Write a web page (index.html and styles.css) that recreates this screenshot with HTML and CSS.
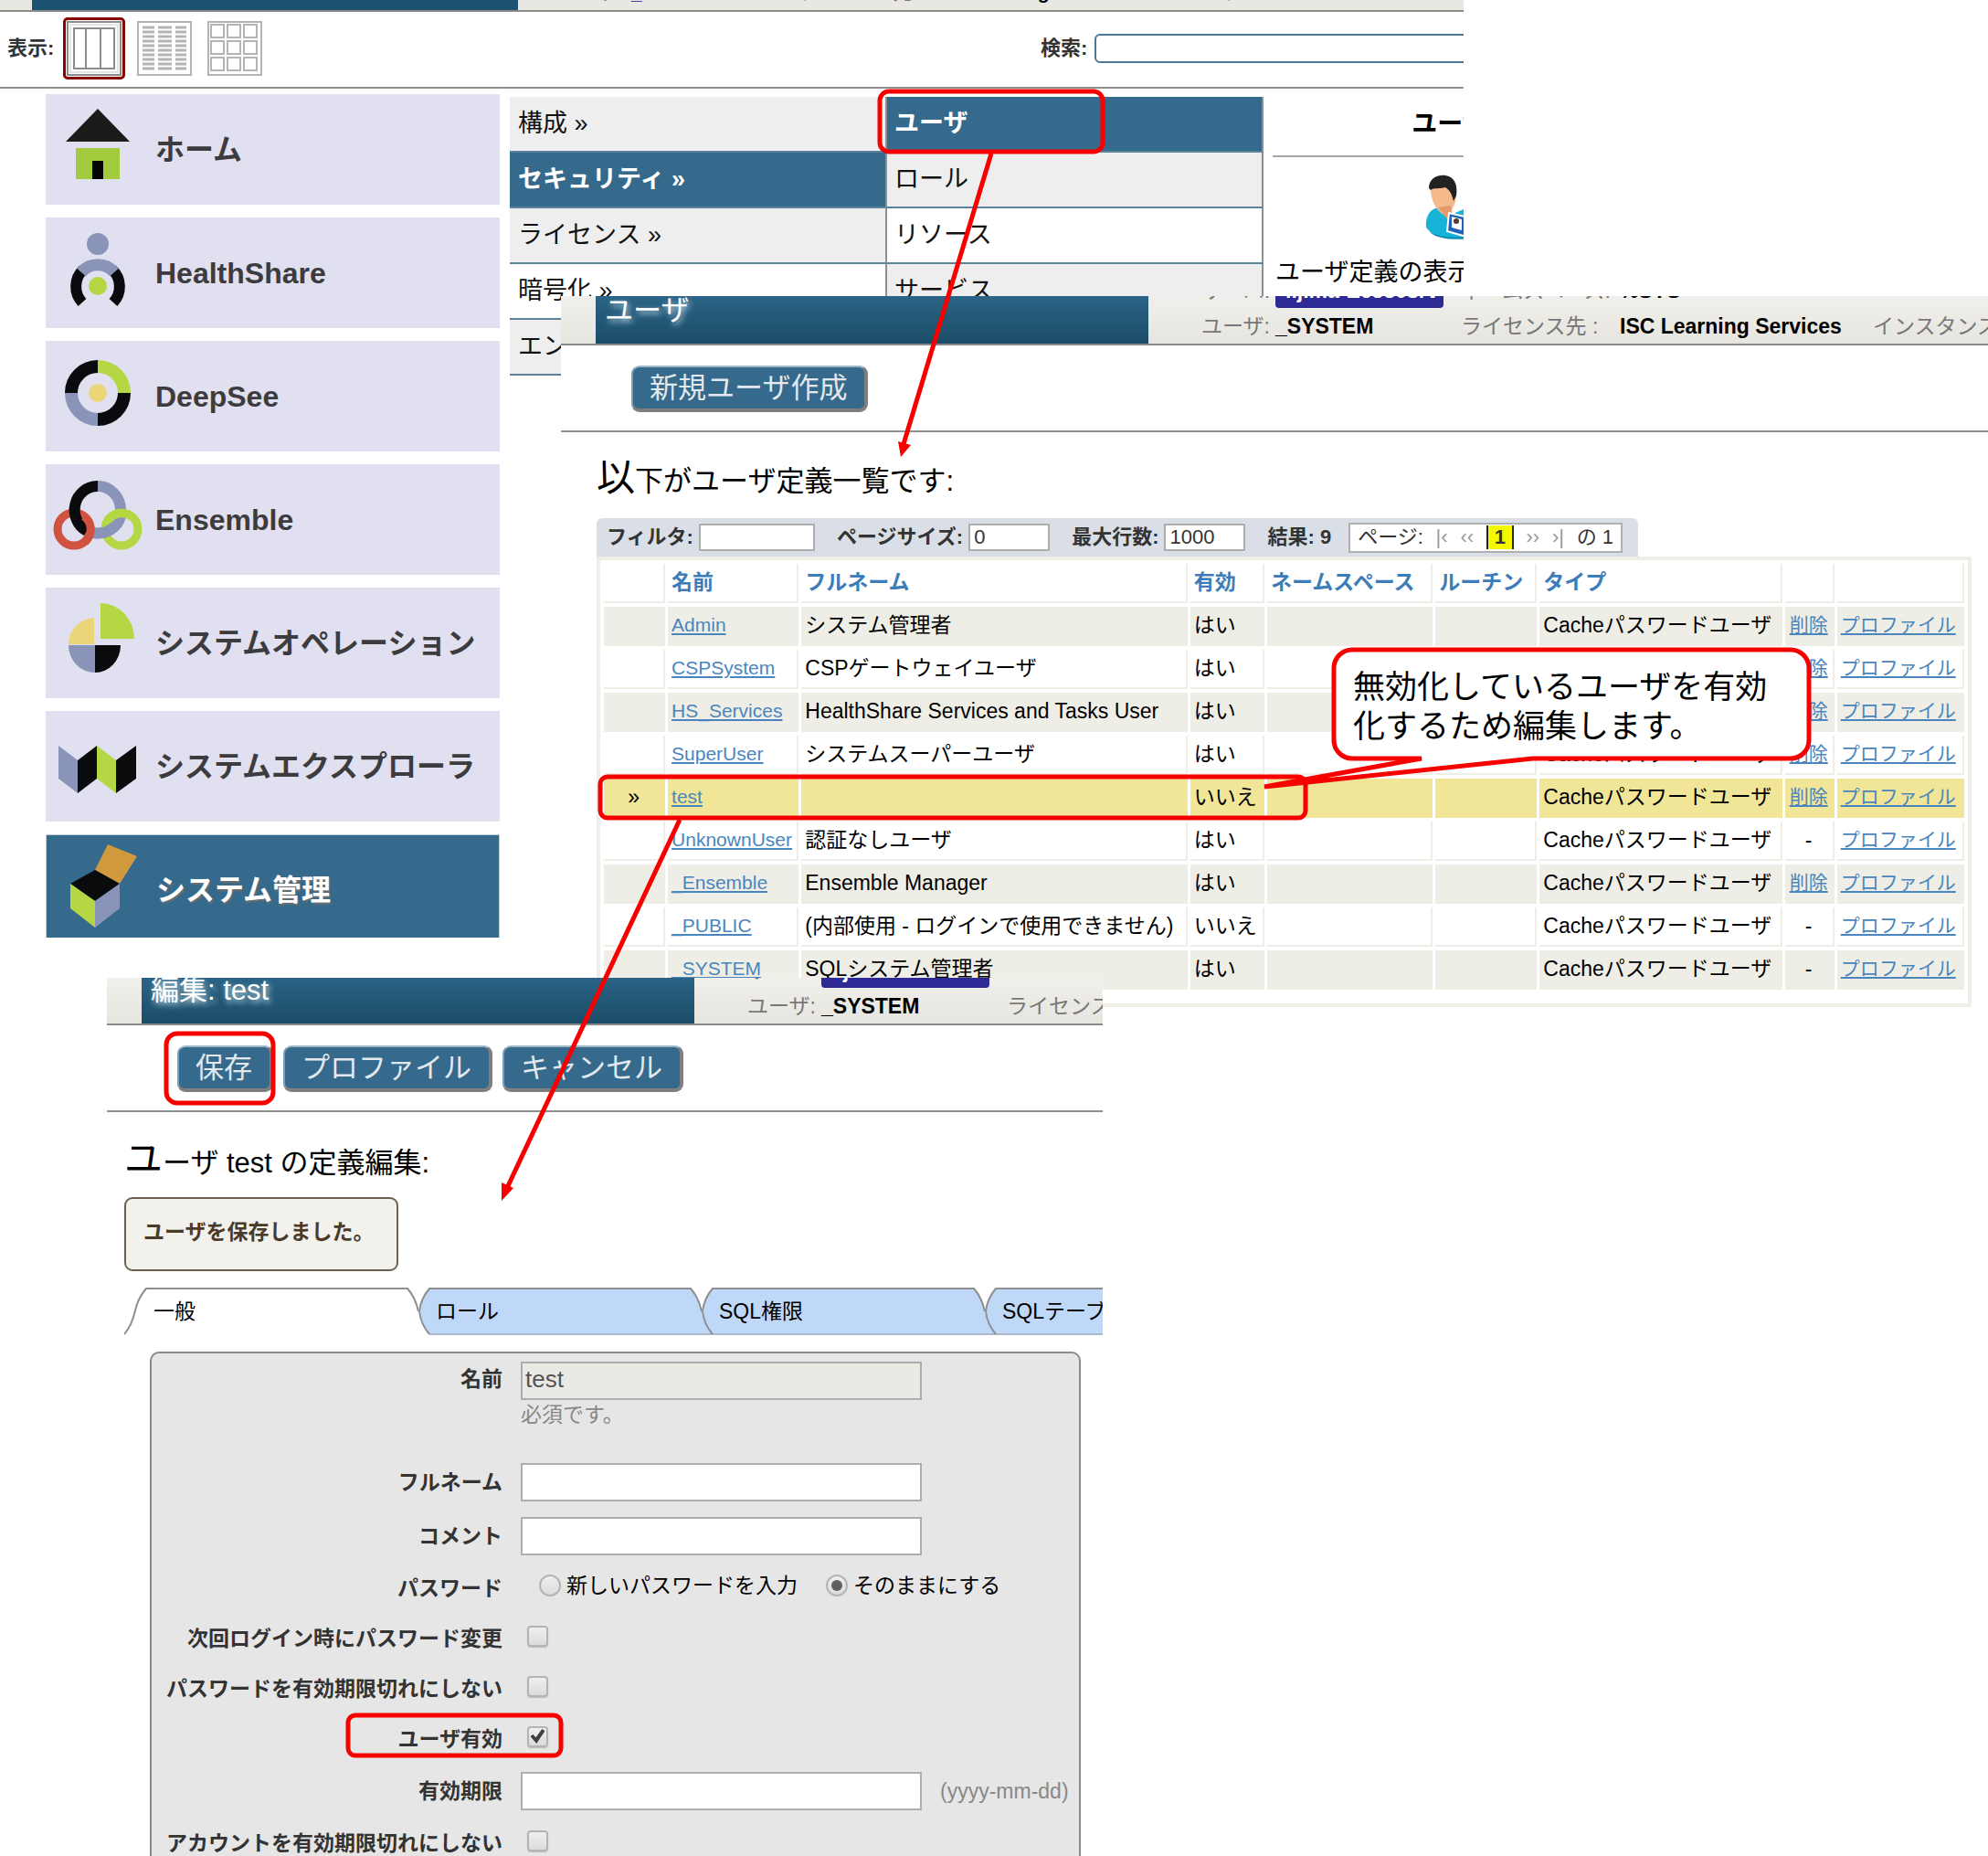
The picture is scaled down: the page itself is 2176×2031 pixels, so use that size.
FILE: index.html
```html
<!DOCTYPE html>
<html lang="ja">
<head>
<meta charset="utf-8">
<title>ユーザ管理</title>
<link rel="stylesheet" href="styles.css">
</head>
<body>
<main class="desk">

  <section class="window window-home">
    <header class="banner banner-small">
      <div class="banner-title"></div>
      <div class="banner-info">
        <span>サーバ:</span><span></span><span></span><span></span><span></span>
        <span>ユーザ:</span><b class="visited">_SYSTEM</b><span>ライセンス先:</span><b>ISC Learning Services</b><span>インスタンス</span>
      </div>
    </header>
    <div class="viewbar">
      <div class="views">
        <span class="bar-label">表示:</span>
        <button class="view view-on" aria-label="列">
          <svg width="60" height="60" viewBox="0 0 60 60" fill="#fff" stroke="#8c8c8c" stroke-width="2"><rect x="1" y="1" width="58" height="58"/><rect x="4" y="4" width="52" height="52" stroke="#e4e4e4"/><rect x="8" y="8" width="44" height="44"/><path d="M21 8v44M37 8v44"/></svg>
        </button>
        <button class="view" aria-label="リスト">
          <svg width="60" height="60" viewBox="0 0 60 60" fill="#fff" stroke="#b4b4b4" stroke-width="2"><rect x="1" y="1" width="58" height="58"/><path stroke-width="3" d="M6 7h13M23 7h15M42 7h12M6 12h13M23 12h15M42 12h12M6 17h13M23 17h15M42 17h12M6 22h13M23 22h15M42 22h12M6 27h13M23 27h15M42 27h12M6 32h13M23 32h15M42 32h12M6 37h13M23 37h15M42 37h12M6 42h13M23 42h15M42 42h12M6 47h13M23 47h15M42 47h12M6 52h13M23 52h15M42 52h12"/></svg>
        </button>
        <button class="view" aria-label="アイコン">
          <svg width="60" height="60" viewBox="0 0 60 60" fill="#fff" stroke="#b4b4b4" stroke-width="2"><rect x="1" y="1" width="58" height="58"/><path d="M4 4h14v14H4zM22 4h14v14H22zM40 4h14v14H40zM4 22h14v14H4zM22 22h14v14H22zM40 22h14v14H40zM4 40h14v14H4zM22 40h14v14H22zM40 40h14v14H40z"/></svg>
        </button>
      </div>
      <div class="search"><label class="bar-label" for="search">検索:</label><input id="search" type="text"></div>
    </div>
    <div class="home-body">
      <nav class="tiles">
        <a class="tile" href="#"><svg width="110" height="121" viewBox="50 103 110 121"><path fill="#1d1a1a" d="M107 119l35 36H72z"/><path fill="#a3cb3e" d="M83 162h48v34H83z"/><path fill="#050505" d="M101 176h12v20h-12z"/></svg>ホーム</a>
        <a class="tile" href="#"><svg width="110" height="121" viewBox="50 238 110 121" fill="none" stroke-width="12"><circle cx="107" cy="267" r="12" fill="#8a94b8"/><path stroke="#0a0b0d" d="M90 331A24 25 0 0 1 91 295M124 331A24 25 0 0 0 123 295"/><path stroke="#8a94b8" stroke-width="13" d="M89 298a24 24 0 0 1 36 0"/><circle cx="107" cy="313" r="10" fill="#b5d744"/></svg>HealthShare</a>
        <a class="tile" href="#"><svg width="110" height="121" viewBox="50 373 110 121" fill="none" stroke-width="14"><path stroke="#0a0b0d" d="M78 430a29 29 0 0 1 29-29M136 430a29 29 0 0 1-29 29"/><path stroke="#b5d744" d="M107 401a29 29 0 0 1 29 29"/><path stroke="#8a94b8" d="M107 459a29 29 0 0 1-29-29"/><circle cx="107" cy="430" r="10" fill="#ead678"/></svg>DeepSee</a>
        <a class="tile" href="#"><svg width="110" height="121" viewBox="50 508 110 121" fill="none"><circle cx="81" cy="579" r="18" stroke="#d05340" stroke-width="9"/><path stroke="#0a0b0d" stroke-width="12" d="M107 532a25 26 0 0 0-12 49"/><path stroke="#8a94b8" stroke-width="12" d="M107 532a25 26 0 0 1 25 26"/><circle cx="133" cy="579" r="18" stroke="#b5d744" stroke-width="9"/><path stroke="#8a94b8" stroke-width="12" d="M101 583c15 3 28-6 31-18"/><path stroke="#b5d744" stroke-width="9" d="M118 570a18 18 0 0 1 28-3"/><path stroke="#d05340" stroke-width="9" d="M92 565a18 18 0 0 1 1 28"/></svg>Ensemble</a>
        <a class="tile" href="#"><svg width="110" height="121" viewBox="50 643 110 121"><path fill="#b5d744" d="M110 660a37 39 0 0 1 37 39h-37z"/><path fill="#ead678" d="M103 705H75a29 29 0 0 1 28-29z"/><path fill="#8a94b8" d="M104 706v30a29 30 0 0 1-29-30z"/><path fill="#0a0b0d" d="M104 706h28a28 30 0 0 1-28 30z"/></svg>システムオペレーション</a>
        <a class="tile" href="#"><svg width="110" height="121" viewBox="50 778 110 121"><path fill="#8a94b8" d="M64 816l21 16v36l-21-16z"/><path fill="#0a0b0d" d="M85 832l21-16v36l-21 16zM127 832l22-16v36l-22 16z"/><path fill="#b5d744" d="M106 816l21 16v36l-21-16z"/></svg>システムエクスプローラ</a>
        <a class="tile tile-on" href="#"><svg width="110" height="119" viewBox="51 914 110 119"><path fill="#d09a3c" d="M118 924l32 13-19 30-27-15z"/><path fill="#0a0b0d" d="M104 952l27 15-27 19-27-19z"/><path fill="#b5d744" d="M77 967l27 19v29l-27-21z"/><path fill="#8a94b8" d="M104 986l27-19v27l-27 21z"/></svg>システム管理</a>
      </nav>
      <nav class="menu">
        <a class="shade" href="#">構成 »</a><a class="on" href="#">セキュリティ »</a><a class="shade" href="#">ライセンス »</a><a href="#">暗号化 »</a><a class="shade" href="#">エンコード »</a>
      </nav>
      <nav class="menu menu-sub">
        <a class="on" href="#">ユーザ</a><a class="shade" href="#">ロール</a><a href="#">リソース</a><a class="shade" href="#">サービス</a>
      </nav>
      <aside class="about">
        <h2>ユーザ</h2>
        <svg width="54" height="72" viewBox="0 0 54 72"><path fill="#18b4d8" d="M1 58c-1-12 4-20 13-22l14 8 14-6c8 3 12 10 12 26-14 8-42 8-53-6z"/><path fill="#0e8fb8" d="M4 62c12 7 30 8 48 4v4c-20 2-40 1-48-8z"/><path fill="#f6b98c" d="M6 18c0-10 26-14 28 2 0 12-5 22-12 25-6-2-15-12-16-27z"/><path fill="#e39a6c" d="M14 36l14-2 2 12-5 4z"/><path fill="#222" d="M4 15C4 4 14 0 22 1c9 1 14 9 12 22l-3 6c-2-8-4-12-9-15-7 2-12 0-16 3z"/><path fill="#1d63b8" stroke="#fff" stroke-width="2" d="M26 42l26 6v22l-28-8z"/><path fill="#fff" d="M29 46l11 3v12l-11-3z"/><circle cx="34" cy="51" r="3" fill="#5b3a26"/></svg>
        <p>ユーザ定義の表示</p>
      </aside>
    </div>
  </section>

  <section class="window window-list">
    <header class="banner">
      <h1 class="banner-title">ユーザ</h1>
      <div class="banner-info">
        <span>サーバ:</span><b class="server">iijima-E6530srv</b><span>ネームスペース:</span><b>%SYS</b><span></span>
        <span>ユーザ:</span><b>_SYSTEM</b><span>ライセンス先 :</span><b>ISC Learning Services</b><span>インスタンス</span>
      </div>
    </header>
    <div class="actions"><button class="cmd">新規ユーザ作成</button></div>
    <div class="list-body">
      <h2 class="lead">以下がユーザ定義一覧です:</h2>
      <div class="filters">
        <label for="filter">フィルタ:</label><input id="filter" class="wide" type="text">
        <label for="pagesize">ページサイズ:</label><input id="pagesize" type="text" value="0">
        <label for="maxrows">最大行数:</label><input id="maxrows" type="text" value="1000">
        <span class="count">結果: 9</span>
        <div class="pager"><span>ページ:</span><i>|‹</i><i>‹‹</i><b>1</b><i>››</i><i>›|</i><span>の 1</span></div>
      </div>
      <div class="grid-frame">
        <table class="users">
          <colgroup><col class="c-mark"><col class="c-name"><col class="c-full"><col class="c-on"><col class="c-ns"><col class="c-rt"><col class="c-type"><col class="c-del"><col class="c-prof"></colgroup>
          <thead><tr><th></th><th>名前</th><th>フルネーム</th><th>有効</th><th>ネームスペース</th><th>ルーチン</th><th>タイプ</th><th></th><th></th></tr></thead>
          <tbody>
            <tr class="odd"><td></td><td><a href="#">Admin</a></td><td>システム管理者</td><td>はい</td><td></td><td></td><td>Cacheパスワードユーザ</td><td><a href="#">削除</a></td><td><a href="#">プロファイル</a></td></tr>
            <tr><td></td><td><a href="#">CSPSystem</a></td><td>CSPゲートウェイユーザ</td><td>はい</td><td></td><td></td><td>Cacheパスワードユーザ</td><td><a href="#">削除</a></td><td><a href="#">プロファイル</a></td></tr>
            <tr class="odd"><td></td><td><a href="#">HS_Services</a></td><td>HealthShare Services and Tasks User</td><td>はい</td><td></td><td></td><td>Cacheパスワードユーザ</td><td><a href="#">削除</a></td><td><a href="#">プロファイル</a></td></tr>
            <tr><td></td><td><a href="#">SuperUser</a></td><td>システムスーパーユーザ</td><td>はい</td><td></td><td></td><td>Cacheパスワードユーザ</td><td><a href="#">削除</a></td><td><a href="#">プロファイル</a></td></tr>
            <tr class="picked"><td>»</td><td><a href="#">test</a></td><td></td><td>いいえ</td><td></td><td></td><td>Cacheパスワードユーザ</td><td><a href="#">削除</a></td><td><a href="#">プロファイル</a></td></tr>
            <tr><td></td><td><a href="#">UnknownUser</a></td><td>認証なしユーザ</td><td>はい</td><td></td><td></td><td>Cacheパスワードユーザ</td><td>-</td><td><a href="#">プロファイル</a></td></tr>
            <tr class="odd"><td></td><td><a href="#">_Ensemble</a></td><td>Ensemble Manager</td><td>はい</td><td></td><td></td><td>Cacheパスワードユーザ</td><td><a href="#">削除</a></td><td><a href="#">プロファイル</a></td></tr>
            <tr><td></td><td><a href="#">_PUBLIC</a></td><td>(内部使用 - ログインで使用できません)</td><td>いいえ</td><td></td><td></td><td>Cacheパスワードユーザ</td><td>-</td><td><a href="#">プロファイル</a></td></tr>
            <tr class="odd"><td></td><td><a href="#">_SYSTEM</a></td><td>SQLシステム管理者</td><td>はい</td><td></td><td></td><td>Cacheパスワードユーザ</td><td>-</td><td><a href="#">プロファイル</a></td></tr>
          </tbody>
        </table>
      </div>
    </div>
  </section>

  <section class="window window-edit">
    <header class="banner">
      <h1 class="banner-title">編集: test</h1>
      <div class="banner-info">
        <span>サーバ:</span><b class="server">iijima-E6530srv</b><span></span><b></b><span></span>
        <span>ユーザ:</span><b>_SYSTEM</b><span>ライセンス先 :</span><b>ISC Learning Services</b><span>インスタンス</span>
      </div>
    </header>
    <div class="actions"><button class="cmd">保存</button><button class="cmd">プロファイル</button><button class="cmd">キャンセル</button></div>
    <div class="edit-body">
      <h2 class="lead">ユーザ test の定義編集:</h2>
      <p class="notice">ユーザを保存しました。</p>
      <div class="tabs">
        <button class="tab tab-first"><svg width="322" height="52" viewBox="0 0 322 52" fill="#fff" stroke="#8f8f8f" stroke-width="2"><path d="M0 51c7-8 10-17 12-26S18 8 24 1h286c7 8 10 16 12 25"/></svg><span>一般</span></button>
        <button class="tab"><svg width="322" height="52" viewBox="0 0 322 52" fill="#bfd8f8" stroke="#8f8f8f" stroke-width="2"><path stroke="none" d="M12 1h286c7 8 10 16 12 25 2 9 6 18 12 25H12C6 44 2 35 1 26 2 17 6 8 12 1z"/><path stroke="#a9b8cc" d="M12 51h310"/><path fill="none" d="M12 51C6 44 2 35 1 26 2 17 6 8 12 1h286c7 8 10 16 12 25"/></svg><span>ロール</span></button>
        <button class="tab"><svg width="322" height="52" viewBox="0 0 322 52" fill="#bfd8f8" stroke="#8f8f8f" stroke-width="2"><path stroke="none" d="M12 1h286c7 8 10 16 12 25 2 9 6 18 12 25H12C6 44 2 35 1 26 2 17 6 8 12 1z"/><path stroke="#a9b8cc" d="M12 51h310"/><path fill="none" d="M12 51C6 44 2 35 1 26 2 17 6 8 12 1h286c7 8 10 16 12 25"/></svg><span>SQL権限</span></button>
        <button class="tab"><svg width="322" height="52" viewBox="0 0 322 52" fill="#bfd8f8" stroke="#8f8f8f" stroke-width="2"><path stroke="none" d="M12 1h286c7 8 10 16 12 25 2 9 6 18 12 25H12C6 44 2 35 1 26 2 17 6 8 12 1z"/><path stroke="#a9b8cc" d="M12 51h310"/><path fill="none" d="M12 51C6 44 2 35 1 26 2 17 6 8 12 1h286c7 8 10 16 12 25"/></svg><span>SQLテーブル</span></button>
      </div>
      <form class="panel">
        <div class="row row-name"><label for="name">名前</label><div class="stack"><input id="name" class="text" type="text" value="test" readonly><span class="hint">必須です。</span></div></div>
        <div class="row"><label for="full">フルネーム</label><input id="full" class="text" type="text"></div>
        <div class="row"><label for="comment">コメント</label><input id="comment" class="text" type="text"></div>
        <div class="row"><span class="name">パスワード</span><div class="radios"><label><input type="radio" name="pw">新しいパスワードを入力</label><label><input type="radio" name="pw" checked>そのままにする</label></div></div>
        <div class="row"><label for="change">次回ログイン時にパスワード変更</label><input id="change" type="checkbox"></div>
        <div class="row"><label for="never">パスワードを有効期限切れにしない</label><input id="never" type="checkbox"></div>
        <div class="row"><label for="enabled">ユーザ有効</label><input id="enabled" type="checkbox" checked></div>
        <div class="row"><label for="expires">有効期限</label><input id="expires" class="text" type="text"><span class="hint">(yyyy-mm-dd)</span></div>
        <div class="row"><label for="account">アカウントを有効期限切れにしない</label><input id="account" type="checkbox"></div>
      </form>
    </div>
  </section>

  <svg class="marks" fill="none" stroke="#f60000" stroke-width="5">
    <rect x="963" y="100" width="244" height="66" rx="10"/>
    <path d="M1085 168L989 486"/>
    <path d="M986 500l-3-17 14 4z" fill="#f60000" stroke="none"/>
    <rect x="657" y="850" width="772" height="45" rx="8"/>
    <path d="M744 897L555 1300"/>
    <path d="M549 1314v-20l13 6z" fill="#f60000" stroke="none"/>
    <rect x="182" y="1131" width="117" height="76" rx="12"/>
    <rect x="381" y="1877" width="233" height="44" rx="8"/>
    <path fill="#fff" d="M1480 711h480a20 20 0 0 1 20 20v79a20 20 0 0 1-20 20h-282L1384 861l172-31h-76a20 20 0 0 1-20-20v-79a20 20 0 0 1 20-20z"/>
  </svg>
  <p class="callout">無効化しているユーザを有効<br>化するため編集します。</p>
</main>
</body>
</html>
```
FILE: styles.css
```css
* { box-sizing: border-box; }
body {
  margin: 0;
  background: #fff;
  color: #000;
  font: 23px/32px "Liberation Sans", "Noto Sans CJK JP", sans-serif;
}
h1, h2, p { margin: 0; font-weight: 400; }
button, input { font: inherit; margin: 0; }
button { cursor: pointer; }

/* Desktop holding three overlapping windows */
.desk { position: relative; height: 100vh; min-height: 1400px; overflow: hidden; }
.window { position: absolute; background: #fff; overflow: hidden; }
.window-home { left: 0; right: 574px; top: 0; height: 1026px; }
.window-list { left: 614px; right: 0; top: 324px; height: 786px; }
.window-edit { left: 117px; right: 969px; top: 1070px; bottom: 0; }

/* Banner */
.banner {
  display: flex;
  align-items: flex-end;
  height: 54px;
  padding-left: 38px;
  overflow: hidden;
  background: linear-gradient(#f0efeb, #e6e5df);
  border-bottom: 2px solid #8a8a8a;
  white-space: nowrap;
}
.window-edit .banner { height: 52px; }
.banner-small { height: 13px; padding-left: 35px; font-size: 21px; background: #e8e7e1; }
.banner-title {
  flex: none;
  width: 605px;
  height: 78px;
  padding: 19px 10px 0;
  background: linear-gradient(#347097, #1a4c66);
  color: #fff;
  font-size: 31px;
  line-height: 46px;
  text-shadow: 2px 3px 6px #cfe4ee;
}
.banner-small .banner-title { width: 532px; background: #1a5270; }
.banner-info {
  display: grid;
  grid-template-columns: 81px 203px 174px 277px auto;
  grid-auto-rows: 39px;
  align-items: center;
  padding-left: 58px;
  color: #777;
}
.banner-small .banner-info { grid-template-columns: 79px 182px 146px 258px auto; padding-left: 45px; }
.banner-info b { color: #000; }
.banner-info .visited { color: #4a3fa0; }
.banner-info .server {
  justify-self: start;
  width: 184px;
  height: 38px;
  overflow: hidden;
  padding: 0 11px;
  border-radius: 4px;
  background: #2d2a96;
  color: #fff;
  line-height: 38px;
}

/* Home window */
.viewbar {
  display: flex;
  justify-content: space-between;
  align-items: center;
  height: 84px;
  padding: 0 0 3px 8px;
  border-bottom: 2px solid #8f8f8f;
}
.views, .search { display: flex; align-items: center; }
.bar-label { color: #333; font-size: 22px; font-weight: 700; }
.view {
  display: flex;
  padding: 1px;
  margin-right: 9px;
  border: 3px solid transparent;
  border-radius: 5px;
  background: none;
}
.views .bar-label { margin-right: 10px; }
.view-on { border-color: #860000; }
.search { flex: none; width: 463px; overflow: hidden; }
.search .bar-label { flex: none; margin-right: 8px; }
.search input {
  flex: none;
  width: 480px;
  height: 32px;
  border: 2px solid #4a7797;
  border-radius: 6px;
}
.home-body { display: flex; padding-left: 50px; }
.tiles { display: flex; flex: none; flex-direction: column; gap: 14px; width: 497px; padding-top: 6px; margin-right: 11px; }
.tile {
  display: flex;
  align-items: center;
  gap: 10px;
  height: 121px;
  background: #e0e0f0;
  color: #3c3c3e;
  font-size: 32px;
  font-weight: 700;
  text-decoration: none;
}
.tile-on {
  border: 1px solid #c4d0d8;
  background: #356a8c;
  color: #fff;
  text-shadow: 1px 2px 2px #6f6f6f;
}
.menu { flex: none; width: 411px; padding-top: 9px; }
.menu a {
  display: block;
  height: 61px;
  padding-left: 9px;
  border-bottom: 2px solid #5b839d;
  color: #111;
  font-size: 27px;
  line-height: 59px;
  text-decoration: none;
}
.menu .shade { background: #eee; }
.menu .on { background: #356a8c; color: #fff; font-weight: 700; }
.menu-sub { width: 414px; }
.menu-sub a { padding-left: 8px; border-left: 2px solid #8a8f93; border-right: 2px solid #8a8f93; }
.about { display: flex; flex: none; flex-direction: column; align-items: center; gap: 19px; width: 388px; padding-top: 9px; margin-left: 10px; font-size: 27px; }
.about h2 { align-self: stretch; height: 66px; border-bottom: 2px solid #a6a6a6; font-size: 28px; font-weight: 700; line-height: 59px; text-align: center; }
.about p { align-self: stretch; padding-left: 3px; }

/* Command bar */
.actions {
  display: flex;
  gap: 11px;
  height: 95px;
  padding: 22px 77px;
  border-bottom: 2px solid #8f8f8f;
}
.cmd {
  height: 51px;
  padding: 0 19px 0 18px;
  border: solid #7f7f7f;
  border-width: 2px 4px 4px 2px;
  border-top-color: #9db6c6;
  border-left-color: #7d9db2;
  border-radius: 9px;
  background: #356a8c;
  color: #e2e8ee;
  font-size: 31px;
  line-height: 42px;
}
.lead { font-size: 31px; line-height: 62px; }
.lead::first-letter { font-size: 42px; }

/* User list */
.list-body { padding: 19px 18px 0 39px; }
.filters {
  display: flex;
  align-items: center;
  width: 1140px;
  height: 42px;
  margin-top: 9px;
  padding-left: 11px;
  border-radius: 6px 6px 0 0;
  background: #dadfe7;
  color: #333;
  font-size: 22px;
  font-weight: 700;
  white-space: nowrap;
}
.filters input { width: 89px; height: 30px; margin: 0 24px 0 6px; padding: 0 4px; border: 2px solid #adadad; color: #333; font-weight: 400; }
.filters .wide { width: 127px; }
.pager { display: flex; flex: none; align-items: center; justify-content: space-between; width: 300px; height: 33px; margin-left: 19px; padding: 0 8px; border: 2px solid #b0b0b0; background: #fff; font-weight: 400; }
.pager i { color: #999; font-style: normal; }
.pager b { flex: none; width: 30px; height: 26px; border: solid #222; border-width: 0 2px; background: #f6f600; line-height: 26px; text-align: center; }
.grid-frame { padding: 0 1px 11px; border: 4px solid #efeee6; }
.users { width: 100%; table-layout: fixed; border-spacing: 3px 4px; }
.c-mark { width: 67px; }
.c-name { width: 143px; }
.c-full { width: 422px; }
.c-on { width: 81px; }
.c-ns { width: 181px; }
.c-rt { width: 111px; }
.c-type { width: 265px; }
.c-del { width: 54px; }
.c-prof { width: 139px; }
.users th, .users td {
  height: 43px;
  padding: 0 0 2px 4px;
  border: solid #efeee6;
  border-width: 0 2px 2px 0;
  line-height: 32px;
  text-align: left;
  white-space: nowrap;
}
.users th { color: #3c7db9; }
.users .odd td { background: #efeee6; }
.users .picked td { border-color: #f1e698; background: #f1e698; }
.users td:first-child, .users td:nth-child(8) { padding-left: 0; text-align: center; }
.users a { color: #4a86bd; font-size: 21px; }

/* User editor */
.edit-body { padding: 21px 24px 0 19px; }
.notice {
  width: 300px;
  height: 81px;
  margin-top: 6px;
  padding-left: 19px;
  border: 2px solid #6b604f;
  border-radius: 9px;
  background: #f2f1ec;
  color: #4a3a28;
  font-weight: 700;
  line-height: 73px;
}
.tabs { display: flex; margin: 18px -24px 0 0; overflow: hidden; }
.tab { position: relative; flex: none; width: 310px; height: 52px; padding: 0 19px; border: 0; background: none; color: #000; text-align: left; }
.tab-first { width: 322px; padding-left: 32px; }
.tab svg { position: absolute; left: 0; top: 0; }
.tab span { position: relative; }
.panel {
  display: flex;
  flex-direction: column;
  gap: 17px;
  height: 700px;
  margin: 18px 0 0 28px;
  padding-top: 9px;
  border: 2px solid #8a8a8a;
  border-radius: 10px;
  background: #e6e6e6;
}
.row { display: flex; flex: none; align-items: center; min-height: 38px; }
.row > label, .row > .name { flex: none; width: 384px; margin-right: 20px; color: #333; font-weight: 700; text-align: right; }
.row-name { align-items: flex-start; height: 94px; }
.row-name > label { line-height: 38px; }
.stack { display: flex; flex-direction: column; }
.text { width: 439px; height: 42px; padding: 0 3px 4px; border: 2px solid #adadad; background: #fff; font-size: 26px; }
.text:read-only { background: #eae9e3; color: #555; }
.hint { color: #888; }
.text + .hint { margin-left: 20px; }
.stack .text + .hint { margin-left: 0; }
.radios { display: flex; gap: 31px; padding: 0 0 6px 20px; }
.radios label { display: flex; align-items: center; gap: 6px; }
input[type="radio"], input[type="checkbox"] {
  appearance: none;
  display: grid;
  place-items: center;
  width: 24px;
  height: 24px;
  border: 2px solid #b4b4b4;
  border-radius: 12px;
  background: linear-gradient(#efefef, #dcdcdc);
}
input[type="checkbox"] { width: 23px; height: 23px; margin: 0 0 6px 7px; border-radius: 4px; box-shadow: 0 1px 1px #bbb; }
input[type="radio"]:checked::before { content: ""; width: 12px; height: 12px; border-radius: 6px; background: #606060; }
input[type="checkbox"]:checked::before { content: ""; width: 16px; height: 16px; background: #404040; clip-path: polygon(0 50%, 18% 38%, 38% 58%, 80% 0, 100% 14%, 42% 100%); }

/* Red annotations over the windows */
.marks { position: absolute; left: 0; top: 0; width: 100%; height: 100%; pointer-events: none; }
.callout { position: absolute; left: 1481px; top: 730px; font-size: 35px; line-height: 43px; white-space: nowrap; }
```
